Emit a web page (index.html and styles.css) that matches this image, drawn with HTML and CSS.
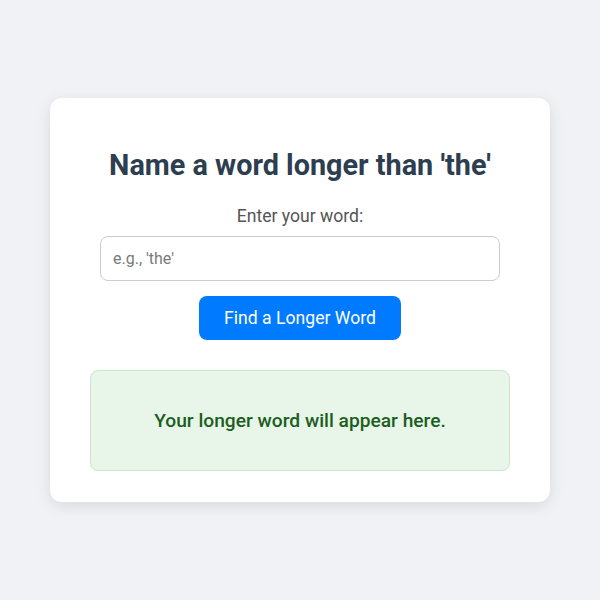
FILE: index.html
```html
<!DOCTYPE html>
<html lang="en">
<head>
<meta charset="utf-8">
<title>Name a word longer than 'the'</title>
<link rel="stylesheet" href="styles.css">
</head>
<body>
<main class="card">
  <h1 class="title">Name a word longer than 'the'</h1>
  <label class="label" for="word">Enter your word:</label>
  <input class="input" id="word" type="text" placeholder="e.g., 'the'">
  <button class="button" type="button">Find a Longer Word</button>
  <div class="result">Your longer word will appear here.</div>
</main>
</body>
</html>
```

FILE: styles.css
```css
html, body {
  margin: 0;
  padding: 0;
}
body {
  background: #f0f2f5;
  font-family: Roboto, "Liberation Sans", sans-serif;
  height: 600px;
  display: flex;
  align-items: center;
  justify-content: center;
}
.card {
  box-sizing: border-box;
  width: 500px;
  background: #ffffff;
  border-radius: 12px;
  box-shadow: 0 4px 16px rgba(0, 0, 0, 0.1);
  padding: 30px 40px 31px;
  display: flex;
  flex-direction: column;
  align-items: center;
}
.title {
  margin: 20px 0 23px;
  font-size: 28.8px;
  line-height: 34px;
  font-weight: 700;
  color: #2c3e50;
  text-align: center;
}
.label {
  font-size: 17.6px;
  line-height: 22px;
  color: #555555;
  margin-bottom: 9px;
}
.input {
  box-sizing: border-box;
  width: 400px;
  height: 45px;
  padding: 0 12px;
  border: 1px solid #cccccc;
  border-radius: 8px;
  font-family: inherit;
  font-size: 16px;
  color: #333;
  outline: none;
}
.input::placeholder {
  color: #7a7a7a;
}
.button {
  margin-top: 15px;
  box-sizing: border-box;
  height: 44px;
  padding: 0 25px;
  border: none;
  border-radius: 8px;
  background: #007bff;
  color: #ffffff;
  font-family: inherit;
  font-size: 17.6px;
}
.result {
  box-sizing: border-box;
  margin-top: 30px;
  width: 100%;
  height: 101px;
  display: flex;
  align-items: center;
  justify-content: center;
  background: #e8f5e9;
  border: 1px solid #c8e6c9;
  border-radius: 8px;
  font-size: 19.2px;
  font-weight: 500;
  color: #1b5e20;
}
```
